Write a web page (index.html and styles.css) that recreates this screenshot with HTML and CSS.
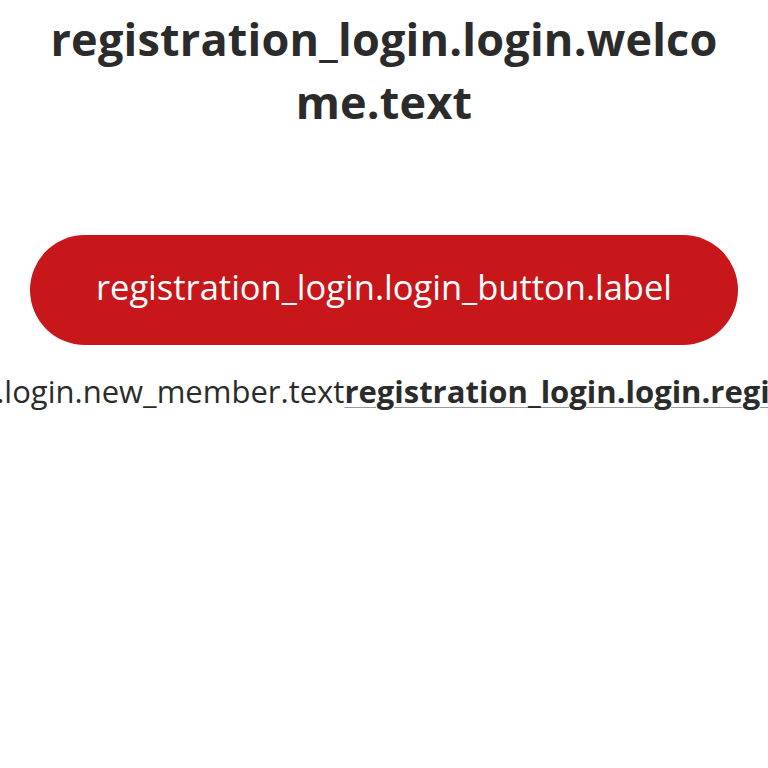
FILE: index.html
```html
<!DOCTYPE html>
<html lang="en">
<head>
<meta charset="utf-8">
<title>Login</title>
<link rel="stylesheet" href="styles.css">
</head>
<body>
<main class="page">
  <h1 class="welcome">registration_login.login.welcome.text</h1>
  <button class="login-btn" type="button">registration_login.login_button.label</button>
  <p class="member-row"><span class="member-text">registration_login.login.new_member.text</span><a class="register-link" href="#">registration_login.login.registration_url.text</a></p>
</main>
</body>
</html>
```
FILE: styles.css
```css
html, body {
  margin: 0;
  padding: 0;
  background: #ffffff;
  overflow: hidden;
}
body {
  font-family: "Open Sans", "Noto Sans", sans-serif;
  color: #2b2b2b;
  width: 768px;
  height: 768px;
}
.page {
  display: flex;
  flex-direction: column;
  align-items: center;
  padding: 7px 30px 0;
}
.welcome {
  margin: 0;
  width: 100%;
  text-align: center;
  font-size: 45px;
  font-weight: 700;
  line-height: 63px;
  letter-spacing: 0.2px;
  word-break: break-all;
  color: #2b2b2b;
}
.login-btn {
  margin-top: 102px;
  width: 708px;
  height: 110px;
  flex-shrink: 0;
  border: none;
  border-radius: 55px;
  background: #c8171b;
  color: #ffffff;
  font-family: "Open Sans", "Noto Sans", sans-serif;
  font-size: 34.5px;
  font-weight: 400;
  padding: 0 0 8px;
}
.member-row {
  margin: 26px 0 0;
  width: 708px;
  display: flex;
  justify-content: center;
  white-space: nowrap;
  font-size: 31px;
  line-height: 40px;
}
.register-link {
  color: #2b2b2b;
  font-weight: 700;
  text-decoration: underline;
  text-decoration-color: #9a9a9a;
  text-decoration-thickness: 1px;
  text-underline-offset: 4px;
}
```
